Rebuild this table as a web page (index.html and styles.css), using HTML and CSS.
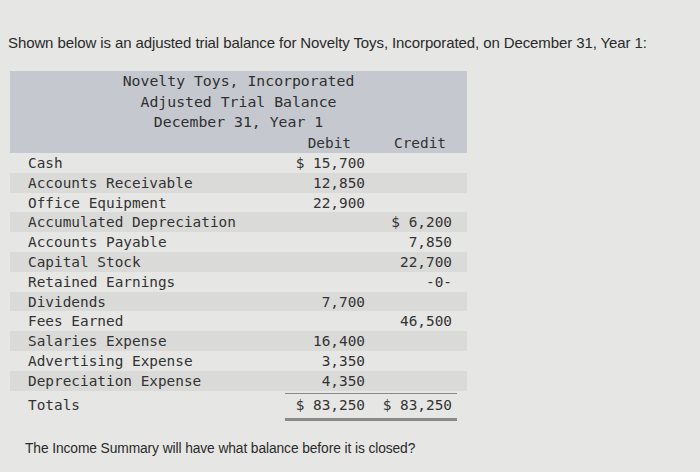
FILE: index.html
```html
<!DOCTYPE html>
<html>
<head>
<meta charset="utf-8">
<link rel="stylesheet" href="styles.css">
</head>
<body>
<p class="intro">Shown below is an adjusted trial balance for Novelty Toys, Incorporated, on December 31, Year 1:</p>
<div class="tb">
  <div class="head">
    <div class="title">Novelty Toys, Incorporated</div>
    <div class="title">Adjusted Trial Balance</div>
    <div class="title">December 31, Year 1</div>
    <div class="cols">
      <span></span>
      <span class="hd-debit">Debit</span>
      <span class="hd-credit">Credit</span>
      <span></span>
    </div>
  </div>
  <div class="row"><span class="lab">Cash</span><span class="dr">$ 15,700</span><span class="cr"></span><span></span></div>
  <div class="row alt"><span class="lab">Accounts Receivable</span><span class="dr">12,850</span><span class="cr"></span><span></span></div>
  <div class="row"><span class="lab">Office Equipment</span><span class="dr">22,900</span><span class="cr"></span><span></span></div>
  <div class="row alt"><span class="lab">Accumulated Depreciation</span><span class="dr"></span><span class="cr">$ 6,200</span><span></span></div>
  <div class="row"><span class="lab">Accounts Payable</span><span class="dr"></span><span class="cr">7,850</span><span></span></div>
  <div class="row alt"><span class="lab">Capital Stock</span><span class="dr"></span><span class="cr">22,700</span><span></span></div>
  <div class="row"><span class="lab">Retained Earnings</span><span class="dr"></span><span class="cr">-0-</span><span></span></div>
  <div class="row alt"><span class="lab">Dividends</span><span class="dr">7,700</span><span class="cr"></span><span></span></div>
  <div class="row"><span class="lab">Fees Earned</span><span class="dr"></span><span class="cr">46,500</span><span></span></div>
  <div class="row alt"><span class="lab">Salaries Expense</span><span class="dr">16,400</span><span class="cr"></span><span></span></div>
  <div class="row"><span class="lab">Advertising Expense</span><span class="dr">3,350</span><span class="cr"></span><span></span></div>
  <div class="row alt"><span class="lab">Depreciation Expense</span><span class="dr">4,350</span><span class="cr"></span><span></span></div>
  <div class="row total"><span class="lab">Totals</span><span class="dr">$ 83,250</span><span class="cr">$ 83,250</span><span></span></div>
</div>
<p class="question">The Income Summary will have what balance before it is closed?</p>
</body>
</html>
```

FILE: styles.css
```css
html, body {
  margin: 0;
  padding: 0;
  background: #e6e6e4;
}
body {
  width: 700px;
  height: 472px;
  overflow: hidden;
  color: #2e2e2e;
}
.intro {
  margin: 0;
  padding: 33px 0 0 8px;
  font-family: "Liberation Sans", Arial, sans-serif;
  font-size: 15px;
  line-height: 20px;
  color: #2a2a2a;
  letter-spacing: -0.1px;
}
.tb {
  margin: 18px 0 0 10px;
  width: 457px;
  font-family: "DejaVu Sans Mono", monospace;
  font-size: 14.4px;
  color: #333333;
}
.head {
  background: #c5c9cf;
  height: 82px;
}
.title {
  text-align: center;
  height: 20.5px;
  line-height: 20.5px;
  color: #303030;
  font-size: 14.8px;
}
.cols, .row {
  display: grid;
  grid-template-columns: 275px 80px 92px 10px;
}
.cols {
  height: 20.5px;
  line-height: 20.5px;
}
.hd-debit { text-align: right; padding-right: 14px; }
.hd-credit { text-align: right; padding-right: 11px; }
.row {
  box-sizing: border-box;
  height: 19.8px;
  line-height: 19.8px;
  padding-top: 1px;
}
.row.alt { background: #dadad8; }
.lab { padding-left: 18px; }
.dr { text-align: right; }
.cr { text-align: right; padding-right: 5px; }
.row.total {
  margin-top: 2px;
  height: 28px;
  line-height: 23px;
  padding-top: 0;
}
.row.total .lab { padding-top: 1px; }
.row.total .dr, .row.total .cr {
  border-top: 1.5px solid #8a8a8a;
  border-bottom: 3px solid #8a8a8a;
}
.question {
  margin: 0;
  padding: 18px 0 0 25px;
  font-family: "Liberation Sans", Arial, sans-serif;
  font-size: 13.8px;
  line-height: 20px;
  color: #2a2a2a;
  letter-spacing: -0.1px;
}
```
